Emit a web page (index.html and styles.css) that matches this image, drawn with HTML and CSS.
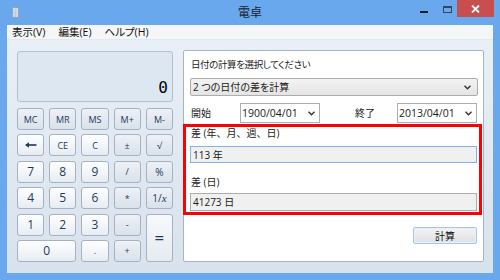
FILE: index.html
```html
<!DOCTYPE html>
<html lang="ja">
<head>
<meta charset="utf-8">
<title>電卓</title>
<link rel="stylesheet" href="styles.css">
</head>
<body>
<div class="window">
  <header class="titlebar">
    <div class="tb-left">
      <svg class="app-icon" width="7" height="11" viewBox="0 0 7 11">
        <rect x="0.5" y="0.5" width="6" height="10" fill="#e3ecf5" stroke="#8ea6bf"/>
        <rect x="1.5" y="1.5" width="4" height="2" fill="#b9cde1"/>
        <g fill="#8aa1b9">
          <rect x="1.5" y="4.5" width="1" height="1"/><rect x="3" y="4.5" width="1" height="1"/><rect x="4.5" y="4.5" width="1" height="1"/>
          <rect x="1.5" y="6.5" width="1" height="1"/><rect x="3" y="6.5" width="1" height="1"/><rect x="4.5" y="6.5" width="1" height="1"/>
          <rect x="1.5" y="8.5" width="1" height="1"/><rect x="3" y="8.5" width="1" height="1"/><rect x="4.5" y="8.5" width="1" height="1"/>
        </g>
      </svg>
    </div>
    <div class="tb-title">電卓</div>
    <div class="tb-right">
      <span class="ctl min"></span>
      <span class="ctl max"></span>
      <span class="ctl close">
        <svg width="9" height="8" viewBox="0 0 9 8"><path d="M1 0.5 L8 7.5 M8 0.5 L1 7.5" stroke="#fff" stroke-width="1.8"/></svg>
      </span>
    </div>
  </header>

  <div class="client">
    <nav class="menubar">
      <span class="menu-item">表示(V)</span>
      <span class="menu-item">編集(E)</span>
      <span class="menu-item">ヘルプ(H)</span>
    </nav>

    <main class="main">
      <section class="calc">
        <div class="display"><span class="display-value">0</span></div>
        <div class="keys">
          <button class="key fn small">MC</button>
          <button class="key fn small">MR</button>
          <button class="key fn small">MS</button>
          <button class="key fn small">M+</button>
          <button class="key fn small">M-</button>

          <button class="key num">
            <svg width="12" height="6" viewBox="0 0 12 6"><path d="M1.5 3 H11.5" stroke="#1e395b" stroke-width="1.6"/><path d="M0 3 L4 0.2 L4 5.8 Z" fill="#1e395b"/></svg>
          </button>
          <button class="key num small">CE</button>
          <button class="key num small">C</button>
          <button class="key fn small">±</button>
          <button class="key fn small">√</button>

          <button class="key num">7</button>
          <button class="key num">8</button>
          <button class="key num">9</button>
          <button class="key fn small">/</button>
          <button class="key fn mid">%</button>

          <button class="key num">4</button>
          <button class="key num">5</button>
          <button class="key num">6</button>
          <button class="key fn small">*</button>
          <button class="key fn mid">1/<i class="ital">x</i></button>

          <button class="key num">1</button>
          <button class="key num">2</button>
          <button class="key num">3</button>
          <button class="key fn small">-</button>
          <button class="key fn eq">=</button>

          <button class="key num zero">0</button>
          <button class="key num small">.</button>
          <button class="key fn small">+</button>
        </div>
      </section>

      <section class="panel">
        <div class="p-label">日付の計算を選択してください</div>
        <div class="select">
          <span>2 つの日付の差を計算</span>
          <svg class="chev" width="7" height="5" viewBox="0 0 7 5"><path d="M0.5 0.8 L3.5 3.8 L6.5 0.8" fill="none" stroke="#333" stroke-width="1.4"/></svg>
        </div>
        <div class="date-row">
          <span class="d-label">開始</span>
          <div class="date-box">
            <span>1900/04/01</span>
            <svg class="chev" width="7" height="5" viewBox="0 0 7 5"><path d="M0.5 0.8 L3.5 3.8 L6.5 0.8" fill="none" stroke="#333" stroke-width="1.4"/></svg>
          </div>
          <span class="d-label end">終了</span>
          <div class="date-box">
            <span>2013/04/01</span>
            <svg class="chev" width="7" height="5" viewBox="0 0 7 5"><path d="M0.5 0.8 L3.5 3.8 L6.5 0.8" fill="none" stroke="#333" stroke-width="1.4"/></svg>
          </div>
        </div>
        <div class="s-label first">差 (年、月、週、日)</div>
        <div class="result focus">113 年</div>
        <div class="s-label second">差 (日)</div>
        <div class="result second">41273 日</div>
        <button class="calc-btn">計算</button>
        <div class="highlight"></div>
      </section>
    </main>
  </div>
</div>
</body>
</html>
```
FILE: styles.css
```css
* {
  box-sizing: border-box;
  margin: 0;
  padding: 0;
}

body {
  margin: 0;
  width: 500px;
  height: 280px;
  overflow: hidden;
  background: #6aa8ee;
  font-family: "Open Sans", "Noto Sans CJK JP", sans-serif;
}

.window {
  width: 500px;
  height: 280px;
  display: flex;
  flex-direction: column;
  background: #6aa8ee;
}

/* title bar */
.titlebar {
  height: 25px;
  flex: 0 0 25px;
  display: grid;
  grid-template-columns: 1fr auto 1fr;
  align-items: start;
}

.tb-left {
  padding: 7px 0 0 12px;
}

.app-icon {
  display: block;
}

.tb-title {
  font-family: "Noto Sans CJK JP", sans-serif;
  font-size: 12px;
  line-height: 14px;
  padding-top: 5px;
  color: #1c2430;
}

.tb-right {
  justify-self: end;
  display: flex;
  align-items: flex-start;
  padding-right: 6px;
}

.ctl.min {
  width: 8px;
  height: 2px;
  margin-top: 11px;
  background: #16202c;
}

.ctl.max {
  width: 9px;
  height: 7px;
  margin: 6px 0 0 15px;
  border: 1px solid #34465a;
  border-top-width: 2px;
}

.ctl.close {
  width: 37px;
  height: 17px;
  margin-left: 5px;
  background: #c94f4f;
  display: flex;
  align-items: center;
  justify-content: center;
}

/* client */
.client {
  flex: 1;
  margin: 0 7px 7px;
  background: linear-gradient(#eaf0f7, #d8e2ed);
  display: flex;
  flex-direction: column;
}

.menubar {
  height: 15px;
  flex: 0 0 15px;
  display: flex;
  gap: 13px;
  padding-left: 5px;
  background: #f5f6f7;
  border-bottom: 1px solid #e4e9ef;
  font-size: 10.5px;
  line-height: 14px;
  color: #111;
  font-feature-settings: "palt";
}

.main {
  flex: 1;
  display: flex;
  gap: 10px;
  padding: 10px 9px 0 10px;
}

/* calculator */
.calc {
  width: 156px;
  flex: 0 0 156px;
  display: flex;
  flex-direction: column;
}

.display {
  height: 51px;
  margin-top: 1px;
  background: #dde7f1;
  border: 1px solid #b3c0ce;
  border-radius: 3px;
  display: flex;
  align-items: flex-end;
  justify-content: flex-end;
  padding: 0 4px 5px 0;
}

.display-value {
  font-family: "DejaVu Sans Mono", monospace;
  font-size: 16px;
  line-height: 16px;
  color: #000;
}

.keys {
  margin-top: 6px;
  display: grid;
  grid-template-columns: repeat(5, 1fr);
  grid-template-rows: repeat(6, 22px);
  column-gap: 5px;
  row-gap: 4.4px;
}

.key {
  font-family: "Open Sans", sans-serif;
  font-size: 12px;
  line-height: 1;
  color: #1e395b;
  border: 1px solid #a6b2c0;
  border-radius: 3px;
  display: flex;
  align-items: center;
  justify-content: center;
  padding: 0;
}

.key.num {
  background: linear-gradient(#fdfeff 0%, #f3f6f9 50%, #e6ecf2 100%);
}

.key.fn {
  background: linear-gradient(#eef2f7 0%, #e3e9f0 50%, #d9e2eb 100%);
}

.key.small {
  font-size: 9px;
}

.key.mid {
  font-size: 10px;
}

.ital {
  font-family: "Liberation Serif", serif;
  font-style: italic;
  font-size: 11px;
}

.key.eq {
  grid-column: 5;
  grid-row: 5 / span 2;
  font-size: 17px;
  background: linear-gradient(#f7f9fb, #e5ebf1);
}

.key.zero {
  grid-column: 1 / span 2;
}

/* date panel */
.panel {
  position: relative;
  width: 301px;
  flex: 0 0 301px;
  height: 212px;
  background: #fff;
  border: 1px solid #a7b4c3;
  border-radius: 2px;
  display: flex;
  flex-direction: column;
  padding: 0 5px 0 6px;
  font-size: 10px;
  color: #1a1a1a;
  font-feature-settings: "palt";
}

.p-label {
  margin-top: 8px;
  height: 12px;
  line-height: 12px;
  padding-left: 1px;
  color: #222;
  font-size: 9.5px;
  letter-spacing: -0.4px;
}

.select {
  margin-top: 7px;
  height: 18px;
  border: 1px solid #acacac;
  border-radius: 2px;
  background: linear-gradient(#f3f3f3, #e4e4e4);
  display: flex;
  align-items: center;
  justify-content: space-between;
  padding: 0 6px 0 2px;
  line-height: 12px;
}

.date-row {
  margin-top: 7px;
  height: 20px;
  display: flex;
  align-items: center;
}

.d-label {
  flex: 0 0 50px;
  padding-left: 1px;
  line-height: 12px;
  color: #222;
}

.d-label.end {
  flex: 0 0 42px;
  margin-left: 35px;
  padding-left: 0;
}

.date-box {
  width: 80px;
  height: 20px;
  border: 1px solid #abadb3;
  background: #fff;
  display: flex;
  align-items: center;
  justify-content: space-between;
  padding: 0 4px 0 1px;
  line-height: 12px;
  font-size: 10.5px;
}

.s-label {
  height: 12px;
  line-height: 12px;
  padding-left: 1px;
  color: #222;
  font-feature-settings: normal;
}

.s-label.first {
  margin-top: 4px;
}

.s-label.second {
  margin-top: 13px;
}

.result {
  height: 18px;
  margin-top: 6px;
  margin-right: 1px;
  background: #f0f0f0;
  border: 1px solid #adadad;
  display: flex;
  align-items: center;
  padding-left: 2px;
  line-height: 12px;
}

.result.focus {
  height: 17px;
  margin-top: 7px;
  border-color: #7db4ea;
}

.result.second {
  margin-top: 5px;
}

.calc-btn {
  align-self: flex-end;
  margin: 16px 1px 0 0;
  width: 64px;
  height: 17px;
  font-family: "Noto Sans CJK JP", sans-serif;
  font-size: 10px;
  line-height: 1;
  color: #111;
  background: linear-gradient(#f4f4f4, #e0e0e0);
  border: 1px solid #a3c6ea;
  border-radius: 2px;
  box-shadow: inset 0 0 0 1px #e6f0fa;
}

/* red annotation frame drawn over the result section */
.highlight {
  position: absolute;
  left: -1px;
  top: 73px;
  width: 299px;
  height: 91px;
  border: 3px solid #ff0000;
  pointer-events: none;
}
```
